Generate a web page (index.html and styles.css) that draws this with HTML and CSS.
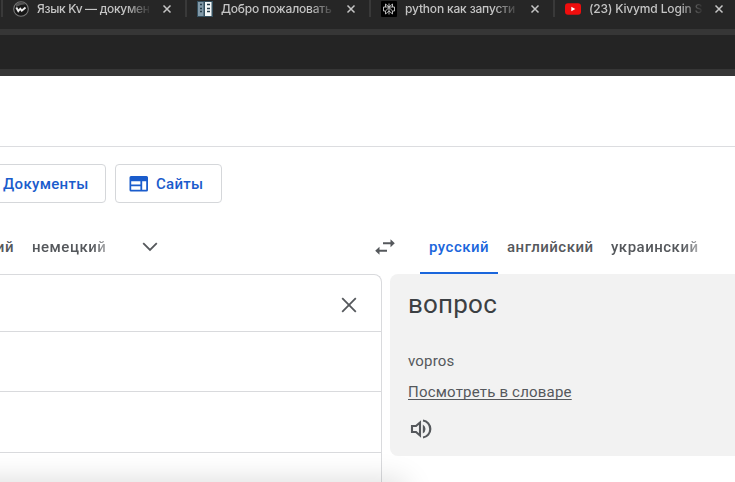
FILE: index.html
```html
<!DOCTYPE html>
<html lang="ru">
<head>
<meta charset="utf-8">
<title>Переводчик</title>
<link rel="stylesheet" href="styles.css">
</head>
<body>
<header class="browser">
  <div class="tabs">
    <div class="tab">
      <svg class="favicon" viewBox="0 0 16 16"><circle cx="8" cy="8" r="7.3" fill="#171717" stroke="#777" stroke-width="1.1"/><path d="M3 3Q8-.5 13 3.200Q8 3 3 6z" fill="#555"/><path d="M3.300 6.500l2 3.500 2-2.300 1.500 2L12.500 6.500" fill="none" stroke="#eee" stroke-width="1.900"/></svg>
      <span class="tab-title t1">Язык Kv — докумен</span>
      <svg class="close" viewBox="0 0 10 10"><path d="M1.500 1.500l7 7m0-7l-7 7"/></svg>
    </div>
    <div class="tab">
      <svg class="favicon" viewBox="0 0 16 16"><path fill="#35505f" d="M0 0h16v16H0z"/><path fill="#8199a8" d="M1 1h5.500v14H1z"/><path fill="#f2f7f8" d="M8 1h6.500v14H8z"/><path d="M3 3.500h2m-2 4h2m-2 3h2M10 3.500h3m-3 4h3m-3 3h3" stroke="#263d49" stroke-width="1.500"/></svg>
      <span class="tab-title t2">Добро пожаловать</span>
      <svg class="close" viewBox="0 0 10 10"><path d="M1.500 1.500l7 7m0-7l-7 7"/></svg>
    </div>
    <div class="tab">
      <svg class="favicon" viewBox="0 0 16 16"><rect width="16" height="16" rx="1" fill="#000"/><path d="M8 2.500v11M8 6L4.500 3v3M8 6l3.500-3v3M2.500 6h11v4H12M2.500 6v4H4M8 6.500L4.500 10v3L8 10l3.500 3v-3z" fill="none" stroke="#ccc" stroke-width=".9"/></svg>
      <span class="tab-title t3">python как запусти</span>
      <svg class="close" viewBox="0 0 10 10"><path d="M1.500 1.500l7 7m0-7l-7 7"/></svg>
    </div>
    <div class="tab">
      <svg class="favicon" viewBox="0 0 16 16"><rect y="2.300" width="16" height="11.400" rx="3" fill="#f00d0d"/><path fill="#fff" d="M6.300 5.800v4.400L10.300 8z"/></svg>
      <span class="tab-title t4">(23) Kivymd Login S</span>
      <svg class="close" viewBox="0 0 10 10"><path d="M1.500 1.500l7 7m0-7l-7 7"/></svg>
    </div>
  </div>
  <div class="toolbar"></div>
</header>
<main>
  <div class="app-header"></div>
  <nav class="modes">
    <button class="mode documents"><span>Документы</span></button>
    <button class="mode sites">
      <svg viewBox="0 0 20 16"><path fill="#1a5ccc" fill-rule="evenodd" d="M2 0h15.500a1.500 1.500 0 0 1 1.500 1.500v12.500a1.500 1.500 0 0 1-1.500 1.500H2A1.500 1.500 0 0 1 .5 14V1.500A1.500 1.500 0 0 1 2 0zM2.200 5.200v3.200h9.200V5.200zm0 5v3.500h9.200v-3.500zm11-5v8.500h4V5.200z"/></svg>
      <span>Сайты</span>
    </button>
  </nav>
  <div class="languages">
    <div class="source-langs">
      <span class="lang cut"><span>ий</span></span>
      <span class="lang german"><span>немецкий</span></span>
      <svg class="chevron" viewBox="0 0 16 10"><path d="M1.200 1.200L8 8l6.800-6.800"/></svg>
    </div>
    <svg class="swap" viewBox="0 0 20 16"><path d="M8 4.200h10M2 11.800h10" fill="none" stroke="#55585c" stroke-width="1.900"/><path fill="#55585c" d="M15.500.2l4.300 4-4.300 4zM4.500 7.800l-4.300 4 4.300 4z"/></svg>
    <div class="target-langs">
      <span class="lang active">русский</span>
      <span class="lang english">английский</span>
      <span class="lang ukrainian">украинский</span>
    </div>
  </div>
  <div class="panels">
    <section class="source">
      <div class="input-row"><svg viewBox="0 0 16 16"><path d="M1.200 1.200l13.600 13.600m0-13.600L1.200 14.800"/></svg></div>
      <div class="row first"></div>
      <div class="row second"></div>
    </section>
    <section class="result">
      <div class="word">вопрос</div>
      <div class="translit">vopros</div>
      <a class="lookup">Посмотреть в словаре</a>
      <svg class="speaker" viewBox="0 0 22 20"><path d="M2 7h4L10 3.500v13L6 13H2z" fill="none" stroke="#55585c" stroke-width="2.100"/><path d="M12.800 5.500q2.700 1.500 2.700 4.500t-2.700 4.500z" fill="#55585c"/><path d="M13 1.500a8.600 8.600 0 0 1 0 17" fill="none" stroke="#55585c" stroke-width="2.200"/></svg>
    </section>
  </div>
</main>
<div class="edge-shadow"></div>
</body>
</html>
```
FILE: styles.css
```css
* { box-sizing: border-box; }
html { height: 482px; overflow: hidden; }
body { margin: 0; width: 735px; height: 482px; overflow: hidden; position: relative; background: #fff; font-family: Roboto, sans-serif; color: #55585c; }
svg { display: block; flex: none; }
.browser { height: 76px; background: #363636; }
.tabs { height: 29px; background: #262626; display: flex; padding-left: 1px; }
.tab { width: 184px; flex: none; height: 17px; border-left: 2px solid #393939; display: flex; align-items: center; padding: 1px 0 0 10px; }
.favicon { width: 16px; height: 16px; }
.tab-title { margin-left: 8px; width: 115px; flex: none; overflow: hidden; white-space: nowrap; font: 500 12px/18px Inter, sans-serif; color: #c4c4c4; -webkit-mask-image: linear-gradient(90deg, #000 78%, transparent 100%); mask-image: linear-gradient(90deg, #000 78%, transparent 100%); }
.t1 { letter-spacing: -.32px; }
.t2 { letter-spacing: -.2px; }
.t3 { letter-spacing: -.18px; }
.t4 { letter-spacing: -.15px; }
.close { width: 10px; height: 10px; margin-left: 10px; }
.close path { stroke: #c5c5c5; stroke-width: 1.5; }
.toolbar { margin-top: 6px; height: 34px; background: #242424; }
.app-header { height: 71px; border-bottom: 1px solid #dcdde0; }
.modes { display: flex; gap: 9px; margin-top: 17px; }
.mode { height: 39px; padding: 0; border: 1px solid #d5d7da; border-radius: 4px; background: #fff; color: #1a5ccc; font: 500 15px/38px Roboto, sans-serif; display: flex; align-items: center; }
.documents { width: 126px; margin-left: -20px; padding-left: 22px; letter-spacing: .32px; }
.sites { width: 107px; padding-left: 13px; letter-spacing: .25px; }
.sites svg { width: 20px; height: 16px; }
.sites span { margin-left: 7px; }
.languages { display: flex; height: 71px; align-items: flex-start; }
.lang { font-size: 15px; font-weight: 500; line-height: 20px; white-space: nowrap; letter-spacing: .5px; }
.source-langs { display: flex; width: 375px; padding-top: 34px; }
.cut { width: 14px; display: flex; justify-content: flex-end; }
.german { width: 75px; margin-left: 18px; -webkit-mask-image: linear-gradient(90deg, #000 80%, #0007); mask-image: linear-gradient(90deg, #000 80%, #0007); }
.chevron { width: 16px; height: 10px; margin: 5px 0 0 35px; }
.chevron path, .input-row path { fill: none; stroke: #55585c; stroke-width: 1.8; }
.swap { width: 20px; height: 16px; margin-top: 36px; }
.target-langs { display: flex; padding-left: 25px; }
.target-langs .lang { padding-top: 34px; height: 71px; }
.target-langs .active { color: #1a66dc; width: 78px; padding-left: 9px; border-bottom: 2px solid #1a66dc; }
.english { width: 87px; margin-left: 9px; }
.ukrainian { margin-left: 17px; -webkit-mask-image: linear-gradient(90deg, #000 82%, #0007); mask-image: linear-gradient(90deg, #000 82%, #0007); }
.panels { display: flex; gap: 8px; }
.source { width: 382px; flex: none; height: 208px; border: 1px solid #d9dadd; border-width: 1px 1px 0 0; border-top-right-radius: 8px; }
.input-row { height: 57px; border-bottom: 1px solid #d9dadd; padding: 22px 24px 0 0; display: flex; justify-content: flex-end; }
.input-row svg { width: 16px; height: 16px; }
.row { border-bottom: 1px solid #d9dadd; }
.first { height: 60px; }
.second { height: 61px; }
.result { width: 345px; height: 182px; flex: none; background: #f2f2f2; border-radius: 8px 0 0 8px; padding: 12px 0 0 18px; }
.word { font-size: 26px; line-height: 36px; color: #3c4043; letter-spacing: .2px; }
.translit { font-size: 15px; line-height: 20px; margin-top: 29px; letter-spacing: .2px; }
.lookup { display: block; width: max-content; font-size: 15px; line-height: 22px; margin-top: 10px; letter-spacing: .2px; text-decoration: underline; text-underline-offset: 2px; text-decoration-skip-ink: none; }
.speaker { width: 22px; height: 20px; margin: 16px 0 0 2px; }
.edge-shadow { position: absolute; left: -40px; bottom: -26px; width: 445px; height: 26px; box-shadow: 0 0 30px 0 rgba(0,0,0,.16); }
```
